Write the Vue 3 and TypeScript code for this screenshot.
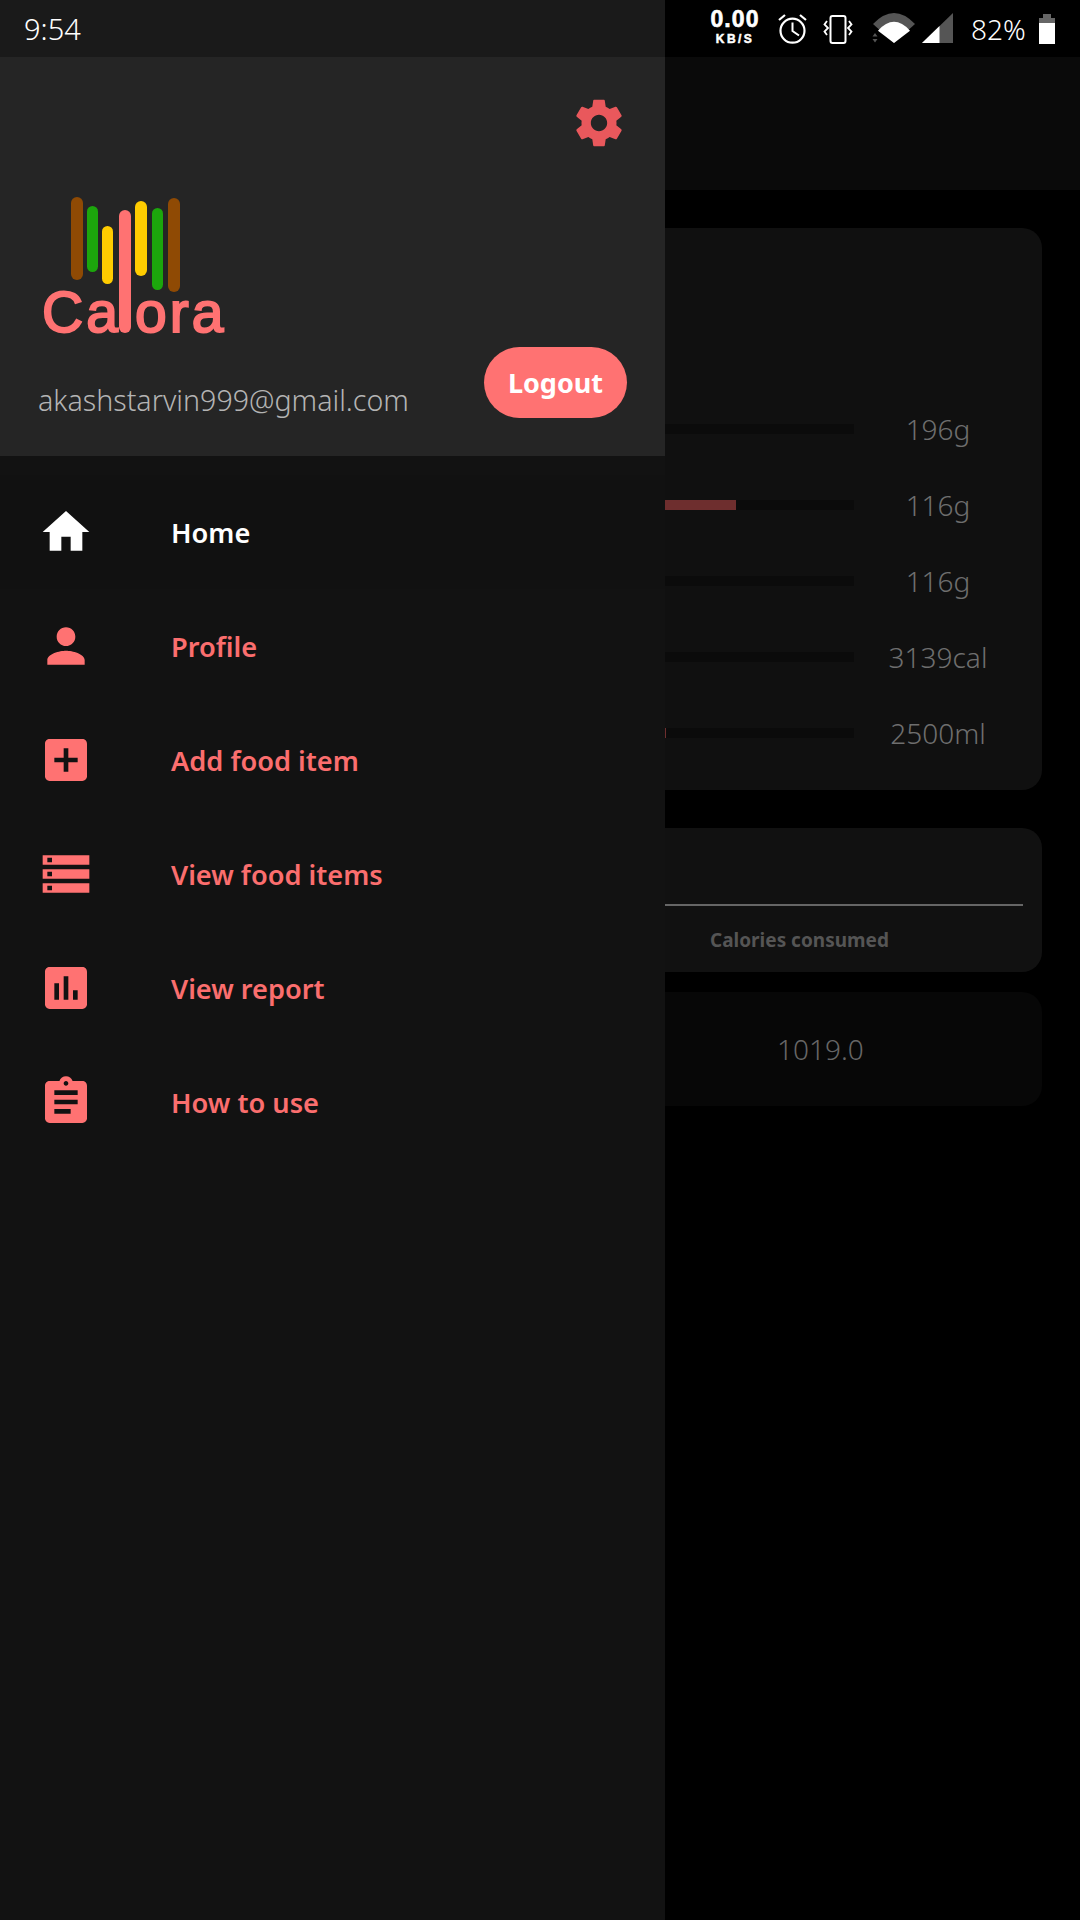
<script setup lang="ts">
interface MenuItem { label: string; path: string; active?: boolean }
interface Row { value: string; fill: number }

const gearPath = 'M19.43 12.98c.04-.32.07-.64.07-.98s-.03-.66-.07-.98l2.11-1.65c.19-.15.24-.42.12-.64l-2-3.46c-.12-.22-.39-.3-.61-.22l-2.49 1c-.52-.4-1.08-.73-1.69-.98l-.38-2.65C14.46 2.18 14.25 2 14 2h-4c-.25 0-.46.18-.49.42l-.38 2.65c-.61.25-1.17.59-1.69.98l-2.49-1c-.23-.09-.49 0-.61.22l-2 3.46c-.13.22-.07.49.12.64l2.11 1.65c-.04.32-.07.65-.07.98s.03.66.07.98l-2.11 1.65c-.19.15-.24.42-.12.64l2 3.46c.12.22.39.3.61.22l2.49-1c.52.4 1.08.73 1.69.98l.38 2.65c.03.24.24.42.49.42h4c.25 0 .46-.18.49-.42l.38-2.65c.61-.25 1.17-.59 1.69-.98l2.49 1c.23.09.49 0 .61-.22l2-3.46c.12-.22.07-.49-.12-.64l-2.11-1.65zM12 15.5c-1.93 0-3.5-1.57-3.5-3.5s1.57-3.5 3.5-3.5 3.5 1.57 3.5 3.5-1.57 3.5-3.5 3.5z'

const menu: MenuItem[] = [
  { label: 'Home', active: true, path: 'M10 20v-6h4v6h5v-8h3L12 3 2 12h3v8z' },
  { label: 'Profile', path: 'M12 12c2.21 0 4-1.79 4-4s-1.79-4-4-4-4 1.79-4 4 1.79 4 4 4zm0 2c-2.67 0-8 1.34-8 4v2h16v-2c0-2.66-5.33-4-8-4z' },
  { label: 'Add food item', path: 'M19 3H5c-1.11 0-2 .9-2 2v14c0 1.1.89 2 2 2h14c1.1 0 2-.9 2-2V5c0-1.1-.9-2-2-2zm-2 10h-4v4h-2v-4H7v-2h4V7h2v4h4v2z' },
  { label: 'View food items', path: 'M2 20h20v-4H2v4zm2-3h2v2H4v-2zM2 4v4h20V4H2zm4 3H4V5h2v2zm-4 7h20v-4H2v4zm2-3h2v2H4v-2z' },
  { label: 'View report', path: 'M19 3H5c-1.1 0-2 .9-2 2v14c0 1.1.9 2 2 2h14c1.1 0 2-.9 2-2V5c0-1.1-.9-2-2-2zM9 17H7v-7h2v7zm4 0h-2V7h2v10zm4 0h-2v-4h2v4z' },
  { label: 'How to use', path: 'M19 3h-4.18C14.4 1.84 13.3 1 12 1c-1.3 0-2.4.84-2.82 2H5c-1.1 0-2 .9-2 2v14c0 1.1.9 2 2 2h14c1.1 0 2-.9 2-2V5c0-1.1-.9-2-2-2zm-7 0c.55 0 1 .45 1 1s-.45 1-1 1-1-.45-1-1 .45-1 1-1zm2 14H7v-2h7v2zm3-4H7v-2h10v2zm0-4H7V7h10v2z' },
]

const rows: Row[] = [
  { value: '196g', fill: 0 },
  { value: '116g', fill: 698 },
  { value: '116g', fill: 0 },
  { value: '3139cal', fill: 0 },
  { value: '2500ml', fill: 628 },
]

const logoBars = [
  { x: 71, y: 197, w: 12, h: 83, c: '#8f4a04' },
  { x: 87, y: 206, w: 11, h: 66, c: '#1ca60c' },
  { x: 102, y: 226, w: 11, h: 58, c: '#ffcc00' },
  { x: 135, y: 201, w: 12, h: 75, c: '#ffcc00' },
  { x: 152, y: 208, w: 11, h: 82, c: '#1ca60c' },
  { x: 168, y: 198, w: 12, h: 94, c: '#8f4a04' },
]
</script>

<template>
  <div class="screen">
    <header class="status">
      <div class="status-left"><span class="time">9:54</span></div>
      <div class="status-right">
        <div class="speed"><span class="speed-num">0.00</span><span class="speed-unit">KB/S</span></div>
        <svg class="s-alarm" viewBox="0 0 30 30" width="30" height="30">
          <circle cx="14.5" cy="16.7" r="12" fill="none" stroke="#fff" stroke-width="2.2" />
          <path d="M14.5 8.500V17l6.500 4.500" fill="none" stroke="#fff" stroke-width="2" />
          <path d="M1 6 7 1M28 6l-6-5" fill="none" stroke="#fff" stroke-width="2.200" />
        </svg>
        <svg class="s-vib" viewBox="0 0 30 30" width="30" height="30">
          <rect x="7.500" y="2" width="15" height="27" rx="2" fill="none" stroke="#fff" stroke-width="2" />
          <path d="M4 7 1.500 10.500 5 14 1.500 17.500 4 21M26 7l2.500 3.500L25 14l3.500 3.500L26 21" fill="none" stroke="#fff" stroke-width="1.800" />
        </svg>
        <svg class="s-wifi" viewBox="0 0 44 31" width="44" height="31">
          <path d="M1 11Q22-11 43 11L22 30z" fill="#555" />
          <path d="M6 17.700Q22 0 38 17.700L22 30z" fill="#fff" />
          <path d="M3 20 5.500 23.500H.5zM.5 26H5.500L3 29.500z" fill="#555" />
        </svg>
        <svg class="s-signal" viewBox="0 0 31 31" width="31" height="31">
          <path d="M31 0v30H0z" fill="#555" />
          <path d="M17.500 13v17H0z" fill="#fff" />
        </svg>
        <span class="batt-text">82%</span>
        <svg class="s-batt" viewBox="0 0 16 30" width="16" height="30">
          <path d="M4 0h8v4h4v26H0V4h4z" fill="#fff" />
          <path d="M4 0h8v4h4v5H0V4h4z" fill="#666" />
        </svg>
      </div>
    </header>

    <div class="body">
      <main class="page">
        <div class="appbar"></div>
        <div class="content">
          <section class="card card-bars">
            <div v-for="(r, i) in rows" :key="i" class="bar-row">
              <div class="track">
                <div class="fill" :style="{ width: r.fill + 'px' }"></div>
              </div>
              <span class="bar-value">{{ r.value }}</span>
            </div>
          </section>
          <section class="card card-chart">
            <div class="axis"></div>
            <div class="chart-label">Calories consumed</div>
          </section>
          <section class="card card-total">
            <span class="total">1019.0</span>
          </section>
        </div>
      </main>

      <aside class="drawer">
        <div class="drawer-head">
          <div class="gear-row">
            <svg class="gear" viewBox="0 0 24 24" width="56" height="56"><path :d="gearPath" /></svg>
          </div>
          <svg class="logo" viewBox="43 197 182 140" width="182" height="140">
            <rect v-for="(b, i) in logoBars" :key="i" :x="b.x" :y="b.y" :width="b.w" :height="b.h" :rx="b.w / 2" :fill="b.c" />
            <text class="logo-text" x="42" y="332">Ca</text>
            <rect x="119" y="210" width="12" height="123" rx="6" fill="#ff7272" />
            <text class="logo-text" x="135" y="332">ora</text>
          </svg>
          <div class="account">
            <span class="email">akashstarvin999@gmail.com</span>
            <button class="logout" type="button">Logout</button>
          </div>
        </div>
        <nav class="menu">
          <div v-for="m in menu" :key="m.label" class="menu-item" :class="{ active: m.active }">
            <svg class="menu-icon" viewBox="0 0 24 24" width="56" height="56"><path :d="m.path" /></svg>
            <span class="menu-label">{{ m.label }}</span>
          </div>
        </nav>
      </aside>
    </div>
  </div>
</template>

<style scoped>
.screen {
  width: 1080px;
  height: 1920px;
  background: #000;
  overflow: hidden;
  display: flex;
  flex-direction: column;
  font-family: "Noto Sans", sans-serif;
  color: #fff;
}
.status { height: 57px; display: flex; flex: none; }
.status-left {
  width: 665px;
  background: #1a1a1a;
  display: flex;
  align-items: center;
  padding-left: 24px;
  box-sizing: border-box;
}
.time { font-size: 29px; font-weight: 300; color: #fff; }
.status-right {
  flex: 1;
  position: relative;
  display: flex;
  align-items: center;
  padding-left: 46px;
}
.speed {
  width: 48px;
  align-self: flex-start;
  margin-top: 9px;
  display: flex;
  flex-direction: column;
  align-items: center;
  font-family: "Liberation Sans", sans-serif;
  font-weight: 700;
  white-space: nowrap;
}
.speed-num { font-size: 23px; line-height: 20px; letter-spacing: 1.1px; -webkit-text-stroke: .6px #fff; }
.speed-unit { font-size: 12px; line-height: 14px; margin-top: 3px; letter-spacing: 2.4px; -webkit-text-stroke: .5px #fff; }
.s-alarm { margin-left: 19px; }
.s-vib { margin-left: 15px; }
.s-wifi { margin-left: 19px; }
.s-signal { margin-left: 6px; }
.batt-text { margin-left: 18px; font-size: 28px; font-weight: 300; }
.s-batt { margin-left: 13px; }

.body { flex: 1; position: relative; min-height: 0; }
.appbar { height: 133px; background: #0a0a0a; }
.content {
  padding: 38px 38px 0;
  display: flex;
  flex-direction: column;
  gap: 20px;
}
.card { border-radius: 20px; background: #101010; box-sizing: border-box; }
.card-bars { height: 562px; margin-bottom: 18px; padding: 163px 18px 0 0; display: flex; flex-direction: column; }
.bar-row { height: 76px; flex: none; display: flex; align-items: center; }
.track { flex: 1; height: 10px; background: #0b0b0b; }
.fill { height: 100%; background: #6e2e2e; }
.bar-value { width: 170px; box-sizing: border-box; padding-right: 2px; text-align: center; font-size: 28px; font-weight: 300; color: #6e6e6e; }
.card-chart { height: 144px; padding: 76px 19px 0 0; background: #111; }
.axis { height: 2px; background: #666; margin-left: 300px; }
.chart-label { margin-top: 21px; padding-left: 672px; font-size: 19px; font-weight: 700; color: #555; line-height: 26px; white-space: nowrap; }
.card-total { height: 114px; background: #070707; display: flex; align-items: center; padding-left: 739px; }
.total { font-size: 28px; font-weight: 300; color: #666; }

.drawer {
  position: absolute;
  left: 0;
  top: 0;
  width: 665px;
  height: 1863px;
  background: #121212;
}
.drawer-head {
  height: 399px;
  background: #252525;
  box-sizing: border-box;
  padding-top: 38px;
  position: relative;
}
.gear-row { display: flex; justify-content: flex-end; padding-right: 38px; }
.gear { fill: #e9585c; display: block; }
.logo { display: block; margin: 46px 0 0 43px; overflow: visible; }
.logo-text {
  font-family: "Liberation Sans", sans-serif;
  font-size: 57px;
  fill: #ff7272;
  stroke: #ff7272;
  stroke-width: 2px;
  letter-spacing: 3px;
}
.account {
  position: absolute;
  left: 38px;
  right: 38px;
  top: 290px;
  display: flex;
  justify-content: space-between;
  align-items: flex-start;
}
.email { margin-top: 33px; font-size: 28.6px; font-weight: 300; color: #b4b4b4; white-space: nowrap; }
.logout {
  width: 143px;
  height: 71px;
  border: 0;
  border-radius: 36px;
  background: #ff7272;
  color: #fff;
  font-family: "Noto Sans", sans-serif;
  font-size: 27px;
  font-weight: 700;
  padding: 0;
}
.menu { padding-top: 19px; }
.menu-item { height: 114px; display: flex; align-items: center; padding-left: 38px; }
.menu-item.active { background: #111; }
.menu-icon { fill: #ff7272; flex: none; }
.menu-item.active .menu-icon { fill: #fff; }
.menu-label { margin-left: 77px; font-size: 27.2px; font-weight: 600; color: #fb6e6e; }
.menu-item.active .menu-label { color: #fff; }
</style>
